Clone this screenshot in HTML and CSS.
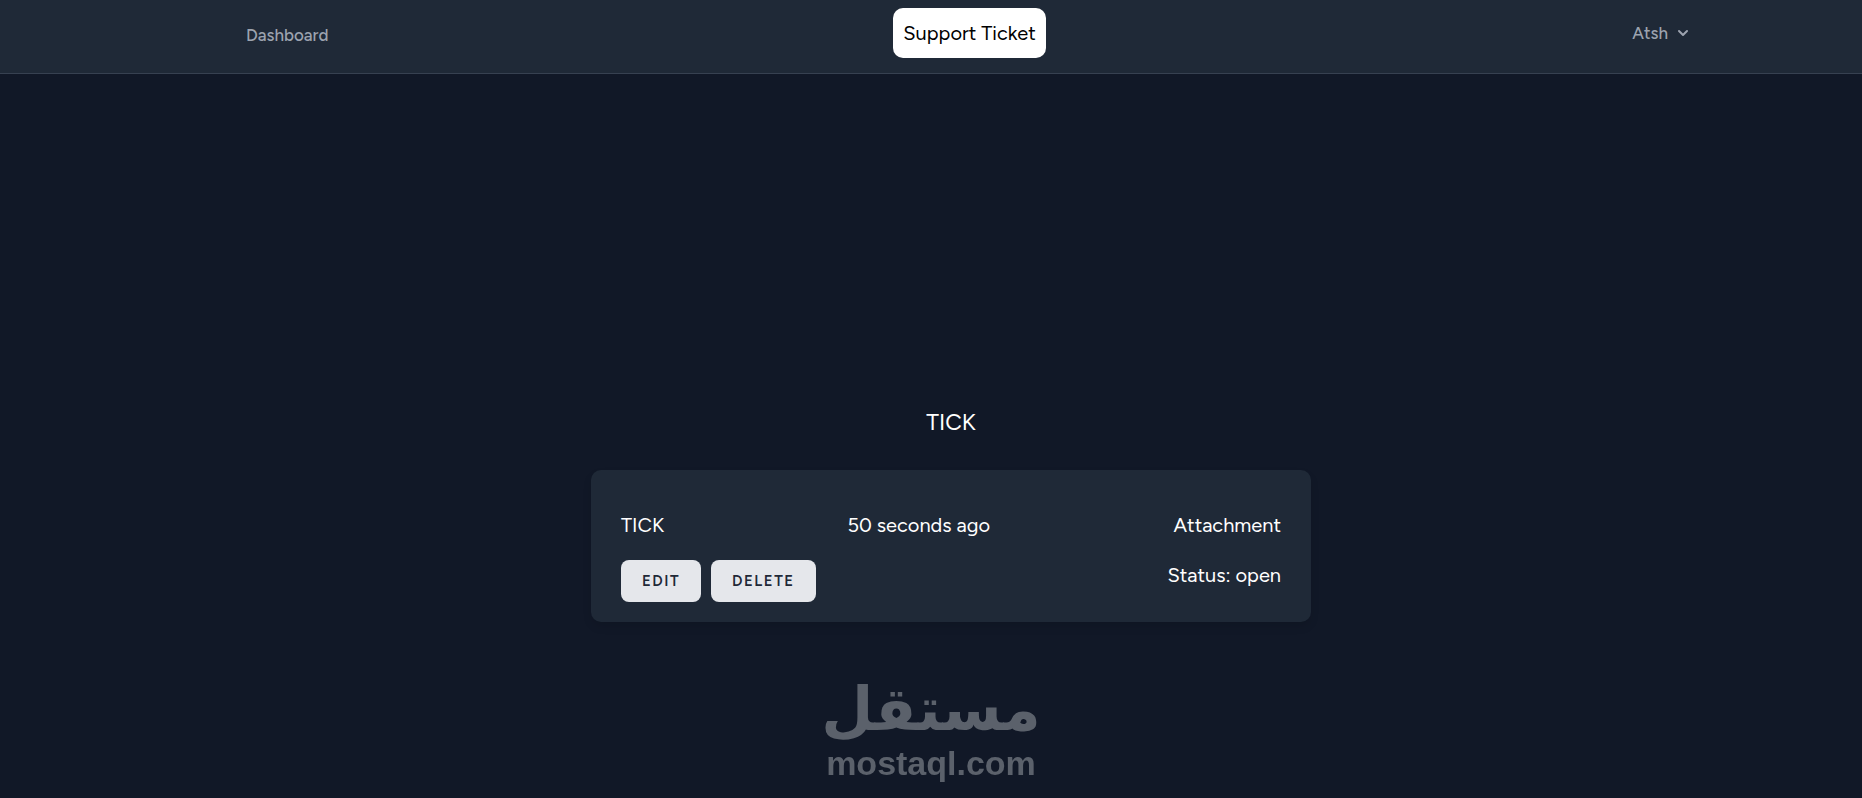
FILE: index.html
```html
<!DOCTYPE html>
<html lang="en">
<head>
<meta charset="UTF-8">
<meta name="viewport" content="width=device-width, initial-scale=1.0">
<title>Support Ticket</title>
<link rel="stylesheet" href="styles.css">
</head>
<body>

<nav class="navbar">
  <div class="nav-inner">
    <a class="nav-link" href="#">Dashboard</a>
    <a class="nav-ticket" href="#">Support Ticket</a>
    <button class="user-menu" type="button">
      Atsh
      <svg viewBox="0 0 20 20" fill="currentColor" aria-hidden="true"><path fill-rule="evenodd" clip-rule="evenodd" d="M5.293 7.293a1 1 0 011.414 0L10 10.586l3.293-3.293a1 1 0 111.414 1.414l-4 4a1 1 0 01-1.414 0l-4-4a1 1 0 010-1.414z"/></svg>
    </button>
  </div>
</nav>

<main class="page">
  <h1>TICK</h1>
  <div class="card">
    <div class="row">
      <p>TICK</p>
      <p>50 seconds ago</p>
      <a href="#">Attachment</a>
    </div>
    <div class="row">
      <div class="actions">
        <button class="btn" type="button">Edit</button>
        <button class="btn" type="button">Delete</button>
      </div>
      <p>Status: open</p>
    </div>
  </div>
</main>

<div class="watermark">
  <span class="mark-ar" lang="ar" dir="rtl">مستقل</span>
  <span class="mark-en">mostaql.com</span>
</div>

</body>
</html>
```
FILE: styles.css
```css
* { margin: 0; padding: 0; box-sizing: border-box; }

body {
  min-height: 100vh;
  background: #111827;
  color: white;
  font-family: Figtree, Lato, sans-serif;
  font-size: 20px;
  line-height: 30px;
}

a { color: inherit; text-decoration: none; }

.navbar {
  background: #1f2937;
  border-bottom: 1px solid #374151;
}

.nav-inner {
  display: grid;
  grid-template-columns: 1fr auto 1fr;
  align-items: start;
  max-width: 1600px;
  margin: 0 auto;
  padding: 8px 38px 15px 115px;
}

.nav-link {
  padding-top: 12px;
  font-size: 17px;
  font-weight: 500;
  color: #9ca3af;
}

.nav-ticket {
  padding: 10px;
  border-radius: 10px;
  background: white;
  color: black;
}

.user-menu {
  display: flex;
  align-items: center;
  justify-self: end;
  gap: 5px;
  padding-top: 10px;
  border: none;
  background: none;
  color: #9ca3af;
  font-family: inherit;
  font-size: 17px;
  font-weight: 500;
  line-height: 30px;
  cursor: pointer;
}
.user-menu svg { width: 20px; height: 20px; }
.user-menu:hover, .nav-link:hover { color: #d1d5db; }

.page {
  width: 100%;
  max-width: 760px;
  margin: 0 auto;
  padding: 332px 0 0 40px;
}

.page h1 {
  font-size: 23px;
  font-weight: 400;
  line-height: 32px;
  text-align: center;
}

.card {
  display: flex;
  flex-direction: column;
  gap: 20px;
  margin-top: 32px;
  padding: 40px 30px 20px;
  border-radius: 10px;
  background: #1f2937;
  box-shadow: 0 5px 8px rgba(0,0,0,0.1);
}

.row {
  display: flex;
  justify-content: space-between;
  align-items: flex-start;
}

.actions { display: flex; gap: 10px; }

.btn {
  padding: 10px 20px;
  border: 1px solid transparent;
  border-radius: 8px;
  background: #e5e7eb;
  color: #1f2937;
  font-family: inherit;
  font-size: 15px;
  font-weight: 600;
  line-height: 20px;
  letter-spacing: 0.1em;
  text-transform: uppercase;
  cursor: pointer;
}
.btn:hover { background: white; }

.watermark {
  position: fixed;
  left: 0;
  right: 0;
  bottom: 15px;
  display: flex;
  flex-direction: column;
  align-items: center;
  color: #5b616b;
  font-weight: 700;
  pointer-events: none;
}
.mark-ar {
  font-family: "DejaVu Sans", sans-serif;
  font-size: 60px;
  line-height: 70px;
}
.mark-en {
  font-family: "Liberation Sans", sans-serif;
  font-size: 34px;
  line-height: 39px;
}
```
